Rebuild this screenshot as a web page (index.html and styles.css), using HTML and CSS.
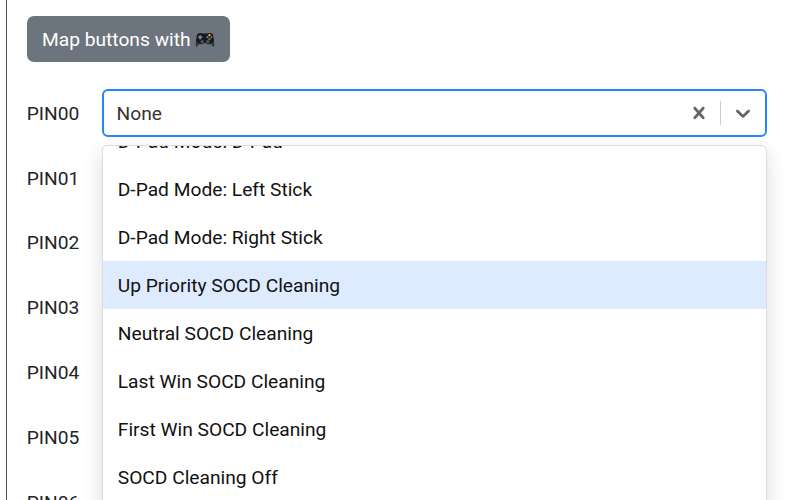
FILE: index.html
```html
<!DOCTYPE html>
<html lang="en">
<head>
<meta charset="utf-8">
<title>Pin Mapping</title>
<link rel="stylesheet" href="styles.css">
</head>
<body>
<main class="panel">
  <button class="map-button" type="button">
    <span>Map buttons with</span>
    <svg class="gamepad" viewBox="0 0 20 16" aria-hidden="true">
      <path d="M1.500 7L.6 12.500q-.1 2.300 1 2.300.8 0 1.500-1.200l2-2.600zM18.500 7l.9 5.500q.1 2.300-1 2.300-.8 0-1.500-1.200l-2-2.600z" fill="#343a3f"/>
      <path d="M4 1.200q2-.5 3.500.3h5q1.500-.8 3.500-.3 1.900.4 2.300 2.700l.7 5.600-2.700 1.800q-1.300 1.200-3.300 1-1.300-.1-2-1.300H9q-.7 1.200-2 1.300-2 .2-3.300-1L1 9.500l.7-5.600Q2.100 1.600 4 1.200z" fill="#17191b"/>
      <path d="M5.200 3v4.400M3 5.200h4.400" stroke="#7b8b95" stroke-width="1.400"/>
      <circle cx="7.200" cy="9.700" r="1.700" fill="#4b565e"/>
      <circle cx="12.800" cy="9.700" r="1.700" fill="#4b565e"/>
      <circle cx="14.500" cy="3.200" r="1.100" fill="#e0cb34"/>
      <circle cx="12.500" cy="5.200" r="1.100" fill="#4794bd"/>
      <circle cx="16.500" cy="5.200" r="1.100" fill="#f0302b"/>
      <circle cx="14.500" cy="7.200" r="1.100" fill="#35aa65"/>
    </svg>
  </button>
  <div class="pins">
    <div class="pin">
      <label>PIN00</label>
      <div class="select">
        <div class="control">
          <span class="value">None</span>
          <svg class="icon" viewBox="0 0 20 20" aria-hidden="true"><path d="M14.348 14.849c-0.469 0.469-1.229 0.469-1.697 0l-2.651-3.030-2.651 3.029c-0.469 0.469-1.229 0.469-1.697 0-0.469-0.469-0.469-1.229 0-1.697l2.758-3.150-2.759-3.152c-0.469-0.469-0.469-1.228 0-1.697s1.228-0.469 1.697 0l2.652 3.031 2.651-3.031c0.469-0.469 1.228-0.469 1.697 0s0.469 1.229 0 1.697l-2.758 3.152 2.758 3.150c0.469 0.469 0.469 1.229 0 1.698z"/></svg>
          <span class="separator"></span>
          <svg class="icon" viewBox="0 0 20 20" aria-hidden="true"><path d="M4.516 7.548c0.436-0.446 1.043-0.481 1.576 0l3.908 3.747 3.908-3.747c0.533-0.481 1.141-0.446 1.574 0 0.436 0.445 0.408 1.197 0 1.615-0.406 0.418-4.695 4.502-4.695 4.502-0.217 0.223-0.502 0.335-0.787 0.335s-0.570-0.112-0.789-0.335c0 0-4.287-4.084-4.695-4.502s-0.436-1.170 0-1.615z"/></svg>
        </div>
        <div class="menu">
          <div class="options">
            <div class="option">D-Pad Mode: D-Pad</div>
            <div class="option">D-Pad Mode: Left Stick</div>
            <div class="option">D-Pad Mode: Right Stick</div>
            <div class="option focused">Up Priority SOCD Cleaning</div>
            <div class="option">Neutral SOCD Cleaning</div>
            <div class="option">Last Win SOCD Cleaning</div>
            <div class="option">First Win SOCD Cleaning</div>
            <div class="option">SOCD Cleaning Off</div>
          </div>
        </div>
      </div>
    </div>
    <div class="pin"><label>PIN01</label></div>
    <div class="pin"><label>PIN02</label></div>
    <div class="pin"><label>PIN03</label></div>
    <div class="pin"><label>PIN04</label></div>
    <div class="pin"><label>PIN05</label></div>
    <div class="pin"><label>PIN06</label></div>
  </div>
</main>
</body>
</html>
```
FILE: styles.css
```css
* { box-sizing: border-box; }

body {
  margin: 0;
  height: 500px;
  overflow: hidden;
  background: #fff;
  color: #212529;
  font: 19.2px/28.8px Roboto, sans-serif;
}

.panel {
  height: 500px;
  margin-left: 6px;
  padding: 16px 25px 0 19.700px;
  border-left: 1px solid #495057;
  overflow: hidden;
}

.map-button {
  display: flex;
  align-items: center;
  gap: 4px;
  width: 203.300px;
  height: 46px;
  padding: 1px 15px 0 15.300px;
  border: 0;
  border-radius: 7px;
  background: #6c757d;
  color: #fff;
  font: inherit;
  white-space: nowrap;
}

.map-button span { padding-top: 1px; }

.gamepad { width: 20px; height: 16px; flex: none; }

.pins {
  display: flex;
  flex-direction: column;
  gap: 16.8px;
  padding-top: 27px;
}

.pin {
  display: flex;
  align-items: center;
  height: 48px;
  flex: none;
}

.pin label {
  width: 75.300px;
  flex: none;
  padding-top: 2.6px;
}

.select { position: relative; flex: 1; }

.control {
  display: flex;
  align-items: center;
  height: 48px;
  padding: 0 10px 0 12.600px;
  border: 2px solid #2684ff;
  border-radius: 6px;
}

.value { flex: 1; padding-top: 2px; color: #333; }

.icon { width: 24px; height: 24px; fill: #666; flex: none; }

.separator {
  width: 1px;
  height: 24px;
  margin: 0 10px 0 9px;
  background: #ccc;
}

.menu {
  position: absolute;
  z-index: 1;
  top: 56px;
  left: 0;
  width: 100%;
  height: 400px;
  overflow: hidden;
  border: 1px solid #dcdcdc;
  border-radius: 5px;
  background: #fff;
  box-shadow: 0 8px 20px rgba(0, 0, 0, .14);
}

.options { margin-top: -29px; }

.option {
  height: 48px;
  padding: 10.600px 15px 8.600px 14.800px;
  color: #111;
}

.focused { background: #deebff; }
```
